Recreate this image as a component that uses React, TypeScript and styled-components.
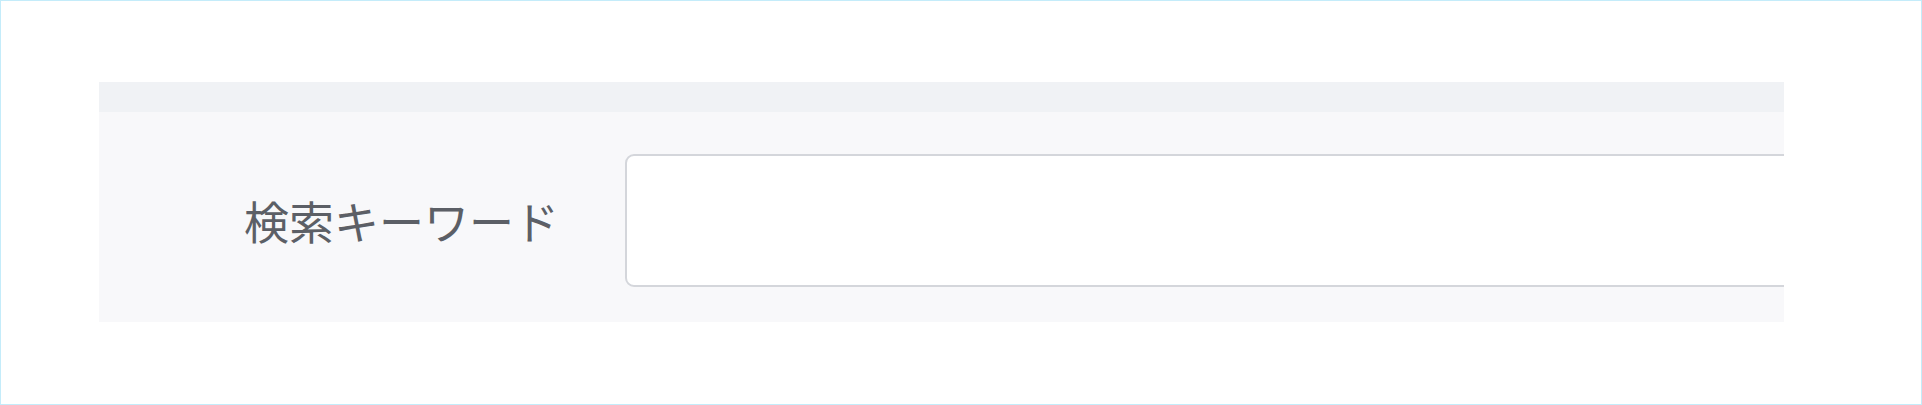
import * as React from "react";
import styled, { createGlobalStyle } from "styled-components";

const GlobalStyle = createGlobalStyle`
  html, body {
    margin: 0;
    padding: 0;
    background: #fff;
  }

  * {
    box-sizing: border-box;
  }
`;

const Frame = styled.div`
  width: 1922px;
  height: 405px;
  border: 1px solid #c4ecfa;
  padding: 81px 0 0 98px;
  background: #fff;
  overflow: hidden;
`;

const Panel = styled.section`
  width: 1685px;
  overflow: hidden;
`;

const PanelHeader = styled.div`
  height: 30px;
  background: #f0f2f5;
`;

const PanelBody = styled.div`
  background: #f8f8fa;
  padding: 42px 0 35px;
`;

const FormRow = styled.div`
  display: flex;
  align-items: center;
`;

const Label = styled.span`
  display: block;
  flex: none;
  width: 526px;
  padding-left: 145px;
  white-space: nowrap;
  font-family: "Noto Sans CJK JP", "Noto Sans", sans-serif;
  font-size: 45px;
  font-weight: 400;
  line-height: 60px;
  color: #5c5f66;
`;

const TextInput = styled.input`
  flex: none;
  width: 1300px;
  height: 133px;
  border: 2px solid #d4d6db;
  border-radius: 9px;
  background: #fff;
  padding: 0 24px;
  font-family: "Noto Sans CJK JP", "Noto Sans", sans-serif;
  font-size: 40px;
  color: #606266;
  outline: none;
`;

function App() {
  return (
    <React.Fragment>
      <GlobalStyle />
      <Frame>
        <Panel>
          <PanelHeader />
          <PanelBody>
            <FormRow>
              <Label>検索キーワード</Label>
              <TextInput type="text" aria-label="検索キーワード" />
            </FormRow>
          </PanelBody>
        </Panel>
      </Frame>
    </React.Fragment>
  );
}

export default App;
